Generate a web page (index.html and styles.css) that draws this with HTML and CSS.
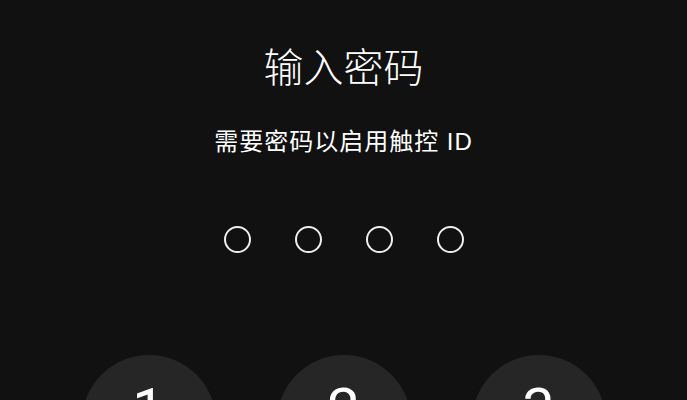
FILE: index.html
```html
<!DOCTYPE html>
<html lang="zh-CN">

<head>
    <meta charset="UTF-8">
    <meta name="viewport" content="width=device-width, initial-scale=1.0">
    <title>输入密码</title>
    <link rel="stylesheet" href="styles.css">
</head>

<body>

    <div class="lock">
        <h1 class="title">输入密码</h1>
        <p class="tip">需要密码以启用触控 ID</p>

        <!-- 密码位 -->
        <ul class="dots">
            <li></li>
            <li></li>
            <li></li>
            <li></li>
        </ul>

        <!-- 数字键盘 -->
        <div class="keypad">
            <a class="key" href="javascript:;">1</a>
            <a class="key" href="javascript:;">2</a>
            <a class="key" href="javascript:;">3</a>
        </div>
    </div>

</body>

</html>
```

FILE: styles.css
```css
* {
    margin: 0;
    padding: 0;
}

ul {
    list-style: none;
}

html,
body {
    height: 100%;
    overflow: hidden;
}

body {
    background-color: #111;
    color: #fff;
    font-family: "Liberation Sans", "Noto Sans CJK SC", sans-serif;
}

.lock {
    display: flex;
    flex-direction: column;
    align-items: center;
    padding-top: 44px;
}

.title {
    font-size: 40px;
    line-height: 48px;
    font-weight: 300;
}

.tip {
    margin-top: 35px;
    font-size: 24px;
    line-height: 30px;
    font-weight: 400;
    letter-spacing: 1px;
}

.dots {
    display: flex;
    gap: 44px;
    margin-top: 69px;
}

.dots li {
    width: 23px;
    height: 23px;
    border: 2px solid #eee;
    border-radius: 50%;
}

.keypad {
    display: grid;
    grid-template-columns: repeat(3, 134px);
    column-gap: 61px;
    margin-top: 102px;
}

.key {
    width: 134px;
    height: 134px;
    padding-top: 25px;
    box-sizing: border-box;
    border-radius: 50%;
    background-color: #262626;
    color: #fff;
    text-align: center;
    text-decoration: none;
    font-family: Roboto, "Liberation Sans", sans-serif;
    font-size: 58px;
    line-height: 58px;
    font-weight: 400;
}
```
